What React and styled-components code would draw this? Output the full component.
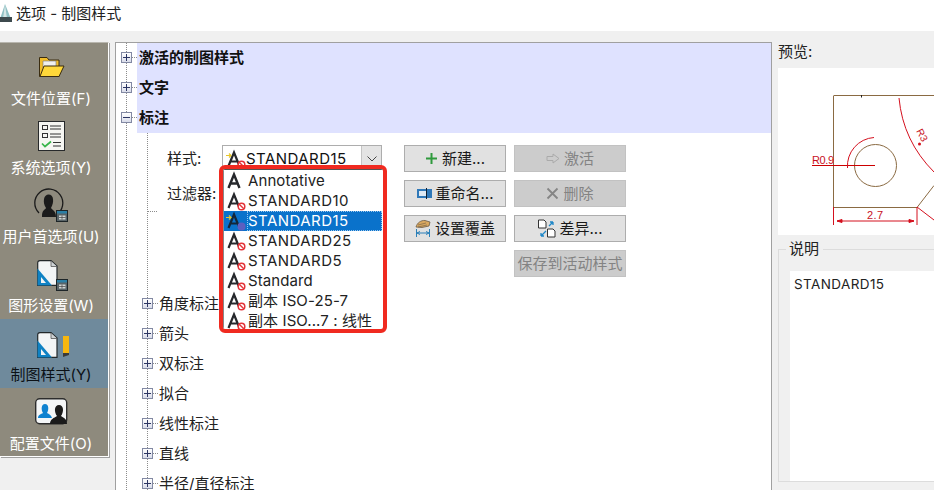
import React from "react";
import styled, { createGlobalStyle } from "styled-components";

const Global = createGlobalStyle`
  html, body { margin: 0; padding: 0; background: #f0f0f0; }
  body { font-family: "Inter", "Noto Sans CJK SC", sans-serif; color: #111; }
  * { box-sizing: border-box; }
`;

const Page = styled.div`
  width: 934px; height: 490px; overflow: hidden; display: flex; flex-direction: column;
  background: #f0f0f0; font-size: 15px;
`;
const TitleBar = styled.div`
  height: 31px; flex: none; background: #fff; display: flex; align-items: center; gap: 3px;
  font-size: 15px; padding-bottom: 7px; color: #222;
`;
const Main = styled.div`
  flex: 1; min-height: 0; display: flex; align-items: flex-start; padding-top: 11px;
`;
const Sidebar = styled.nav`
  width: 109px; height: 415px; flex: none; background: #8e8a7d; padding: 0 6px 0 0;
  border-top: 1px solid #b8b6ae; border-right: 1px solid #fff; border-bottom: 1px solid #fff;
  box-shadow: 1px 1px 0 #a0a0a0;
`;
const NavItem = styled.div`
  height: 69px; margin-right: -6px; padding: 6px 6px 0 0; display: flex; flex-direction: column; align-items: center;
  background: ${p => (p.$active ? "#6f8a9c" : "transparent")};
  color: ${p => (p.$active ? "#0c1116" : "#fff")};
  svg { display: block; flex: none; }
`;
const NavLabel = styled.span`
  margin-top: 3px; height: 22px; line-height: 22px; font-size: 15px; white-space: nowrap;
`;
const Panel = styled.section`
  width: 657px; height: 460px; flex: none; margin-left: 6px; background-color: #fff;
  border: 1px solid #a0a0a0; border-bottom: 0; overflow: hidden;
  background-image: linear-gradient(#8c8c8c 50%, transparent 50%);
  background-size: 1px 2px; background-repeat: repeat-y; background-position: 10px 0;
`;
const Row = styled.div`
  height: 30px; display: flex; align-items: center;
  padding-left: ${p => (p.$child ? "26px" : "5px")};
`;
const Expander = styled.span`
  width: 11px; height: 11px; flex: none; border: 1px solid #8289a3; position: relative; top: -1px; background: linear-gradient(#fff, #d9dcea);
  &::before { content: ""; position: absolute; left: 1px; right: 1px; top: 4px; height: 1px; background: #2b3563; }
  &::after { content: ""; position: absolute; top: 1px; bottom: 1px; left: 4px; width: 1px; background: #2b3563; display: ${p => (p.$open ? "none" : "block")}; }
`;
const Dots = styled.span`
  width: 5px; flex: none; border-top: 1px dotted #8c8c8c; position: relative; top: -1px;
`;
const Heading = styled.div`
  flex: 1; height: 30px; line-height: 30px; padding-left: 2px; background: #dfe2ff; font-weight: 700; font-size: 15px; color: #111;
`;
const ChildText = styled.span`
  margin-left: 1px; margin-bottom: 3px; font-size: 15px; color: #222; white-space: nowrap;
`;
const Children = styled.div`
  background-image: linear-gradient(#8c8c8c 50%, transparent 50%);
  background-size: 1px 2px; background-repeat: repeat-y; background-position: 31px 0;
`;
const Form = styled.div`
  height: 156px; padding: 12px 0 0 51px; display: flex; position: relative;
`;
const Fields = styled.div`
  width: 237px; flex: none; position: relative;
`;
const FieldRow = styled.div`
  height: 27px; margin-bottom: 8px; display: flex; align-items: center; font-size: 15px; color: #222;
`;
const FieldLabel = styled.span`
  width: 55px; flex: none; white-space: nowrap; margin-bottom: 2px;
`;
const Combo = styled.div`
  width: 160px; height: 27px; border: 1px solid #adadad; background: #fff; display: flex; align-items: center; padding-left: 3px; font-size: 15px; color: #111;
`;
const ComboText = styled.span`
  flex: 1; margin-left: 1px; white-space: nowrap; margin-bottom: 1px; letter-spacing: .45px;
`;
const ComboButton = styled.span`
  width: 20px; height: 25px; flex: none; background: #e4e4e4; border-left: 1px solid #c4c4c4; display: flex; align-items: center; justify-content: center;
`;
const Leader = styled.div`
  position: absolute; left: -20px; top: 66px; width: 10px; border-top: 1px dotted #8c8c8c;
`;
const Popover = styled.div`
  position: absolute; left: 52px; top: 20px; width: 168px; height: 168px; border: 4px solid #f02a20; border-radius: 6px;
  background: #fff; overflow: hidden;
`;
const List = styled.ul`
  margin: 0; padding: 1px 0 0; list-style: none; border-top: 1px solid #555; border-left: 1px solid #888; height: 100%;
`;
const Option = styled.li`
  height: 20px; display: flex; align-items: center; padding-left: 2px; font-size: 15px; white-space: nowrap;
  width: 158px; color: ${p => (p.$selected ? "#fff" : "#222")};
  background: ${p => (p.$selected ? "#0a72cb" : "transparent")};
`;
const OptionText = styled.span`
  margin-left: 2px; padding: 0 1px; height: 20px; line-height: 19px; flex: 1;
  letter-spacing: ${p => (p.$wide ? ".45px" : ".1px")};
  outline: ${p => (p.$selected ? "1px dotted #9cc8ef" : "none")}; outline-offset: -1px;
`;
const Buttons = styled.div`
  display: grid; grid-template-columns: 102px 112px; grid-auto-rows: 27px; gap: 8px; align-content: start;
`;
const Button = styled.div`
  display: flex; align-items: center; justify-content: center; gap: 4px; white-space: nowrap; font-size: 15px; line-height: 24px;
  border: 1px solid ${p => (p.$disabled ? "#c2c2c2" : "#adadad")};
  background: ${p => (p.$disabled ? "#cccccc" : "#e1e1e1")};
  color: ${p => (p.$disabled ? "#838383" : "#1a1a1a")};
  grid-column: ${p => p.$column || "auto"};
  svg { flex: none; }
`;
const RightColumn = styled.aside`
  width: 160px; flex: none; margin-left: 6px;
`;
const PreviewLabel = styled.div`
  height: 20px; line-height: 20px; margin-bottom: 6px; font-size: 15px; color: #222;
`;
const Preview = styled.div`
  height: 167px; background: #fff;
  svg { display: block; }
`;
const Group = styled.fieldset`
  margin: 4px 0 0; padding: 0 0 0 11px; width: 170px; border: 1px solid #dcdcdc; min-width: 0;
`;
const GroupLegend = styled.legend`
  padding: 0 4px 0 3px; margin-left: -4px; height: 20px; line-height: 20px; font-size: 15px; color: #222;
`;
const Description = styled.div`
  margin-top: 12px; height: 210px; background: #fff; padding: 3px 4px; font-size: 13.5px; letter-spacing: .4px; line-height: 20px; color: #222;
`;

const Badge = ({ dim }) => (
  <g>
    <circle cx="15.500" cy="14.500" r="3.300" fill={dim ? "#5d5fc0" : "#fff"} stroke={dim ? "#5d5fc0" : "#e4343a"} strokeWidth="1.500" />
    {!dim && <path d="M13.200 12.200 17.800 16.800" stroke="#e4343a" strokeWidth="1.400" />}
  </g>
);

const StyleIcon = ({ badge, arrow, heavy, dark }) => (
  <svg width="19" height="18" viewBox="0 0 19 18" fill="none" overflow="visible">
    <path d="M2.500 16 8 2.500 13.500 16M4.700 11.500H11.300" stroke={dark ? "#13263a" : "#26282c"} strokeWidth={heavy ? 2.400 : 2.200} />
    {arrow && <path d="M0 5.500H4.500M3 3.500 5 5.500 3 7.500" stroke="#e8c72a" strokeWidth="1.200" />}
    {badge && <Badge dim={dark} />}
  </svg>
);

const FolderIcon = () => (
  <svg width="40" height="36" viewBox="0 0 40 36" fill="none">
    <path d="M8.500 27.500V8.500H16L18 11H28V27.500Z" fill="#f2bd2c" stroke="#3a2c10" />
    <path d="M12 12H25V19H12Z" fill="#f0f0ee" stroke="#777" strokeWidth=".6" />
    <path d="M9 27.500 13 17H33L28 27.500Z" fill="#ffd83a" stroke="#3a2c10" />
  </svg>
);
const ChecklistIcon = () => (
  <svg width="40" height="36" viewBox="0 0 40 36" fill="none">
    <rect x="7.500" y="3.500" width="26" height="29" fill="#f6f6f2" stroke="#27292b" />
    <rect x="11.500" y="7.500" width="5" height="4" stroke="#333" />
    <rect x="11.500" y="15.500" width="5" height="4" stroke="#333" />
    <path d="M19 8H30M19 11H30M19 16H30M19 19H30M22 24.500H30M22 28H30" stroke="#333" strokeWidth="1.200" />
    <path d="M11 25.500 14 28.500 20 23.500" stroke="#39b54a" strokeWidth="1.700" />
  </svg>
);
const CalendarBadge = ({ x, y }) => (
  <g transform={`translate(${x} ${y})`}>
    <rect x=".5" y=".5" width="11" height="11" fill="#596468" stroke="#1d2528" />
    <rect x="1" y="1" width="10" height="2.500" fill="#2a7fa6" />
    <path d="M3 5.500H9.500V9.500H3Z" fill="#cfd5d4" />
    <path d="M3 7.500H9.500M6 5.500V9.500" stroke="#444" strokeWidth=".7" />
  </g>
);
const UserIcon = () => (
  <svg width="40" height="36" viewBox="0 0 40 36" fill="none">
    <path d="M25 28A14 14 0 1 0 8 26" stroke="#1b1b1b" strokeWidth="1.300" />
    <path d="M11 29C11 23 14 23 15 21 13 18 12.500 15 13 12 13.500 9 15.500 7.500 17.500 7.500 20 7.500 22 9.500 22 12 22.500 15 21.500 18 20 21 21.500 23 25 24 25 30H11Z" fill="#1b1b1b" />
    <CalendarBadge x={25} y={23} />
  </svg>
);
const SheetBase = ({ top = 4 }) => (
  <g transform={`translate(6 ${top})`}>
    <path d="M.7 3Q.7.7 3 .7H14L20 6V25.300H.7Z" fill="#f3f5f6" stroke="#23282b" strokeWidth="1.200" />
    <path d="M14 1V6.500H20" fill="#cfd3d5" stroke="#555" strokeWidth=".8" />
    <path d="M.5 8.500 15 25.500H.5Z" fill="#0f82c4" />
    <path d="M4 17 9 23H4Z" fill="#f3f5f6" />
  </g>
);
const SettingsIcon = () => (
  <svg width="40" height="36" viewBox="0 0 40 36" fill="none">
    <SheetBase />
    <CalendarBadge x={25} y={23} />
  </svg>
);
const DraftIcon = () => (
  <svg width="40" height="36" viewBox="0 0 40 36" fill="none">
    <SheetBase top={7} />
    <rect x="32" y="11" width="6" height="17" fill="#f8b70e" />
    <path d="M32 28H38V30L32 32Z" fill="#3a3a38" />
  </svg>
);
const ProfileIcon = () => (
  <svg width="40" height="36" viewBox="0 0 40 36" fill="none">
    <rect x="4.700" y="4.700" width="31" height="25" rx="4" fill="#f4f6f7" stroke="#2d2d2d" strokeWidth="1.400" />
    <path d="M7 24C7 21 10 20 12 19 10 16 10 10 14 10 18 10 18 16 16 19 18 20 20 21 21 24Z" fill="#0f82d0" />
    <path d="M19 30C19 25 23 24 26 22 23 18 23 11 28 11 33 11 33 18 30 22 33 24 36 25 36 30Z" fill="#1b1b1b" />
  </svg>
);
const Chevron = () => (
  <svg width="10" height="6" viewBox="0 0 10 6" fill="none"><path d="M.5.5 5 5 9.500.5" stroke="#444" /></svg>
);
const PlusIcon = () => (
  <svg width="13" height="13" viewBox="0 0 13 13" fill="none"><path d="M6.500 1V12M1 6.500H12" stroke="#2f9a3d" strokeWidth="2" /></svg>
);
const ArrowIcon = () => (
  <svg width="14" height="11" viewBox="0 0 14 11" fill="none"><path d="M1 3.500H7V1L13 5.500 7 10V7.500H1Z" stroke="#aaa" /></svg>
);
const CrossIcon = () => (
  <svg width="13" height="13" viewBox="0 0 13 13" fill="none"><path d="M1.500 1.500 11.500 11.500M11.500 1.500 1.500 11.500" stroke="#858585" strokeWidth="1.800" /></svg>
);
const RenameIcon = () => (
  <svg width="15" height="11" viewBox="0 0 15 11" fill="none">
    <rect y="1" width="15" height="9" fill="#2f78b8" />
    <rect x="2" y="3" width="8" height="5" fill="#dfeaf4" />
    <path d="M9.500 0V11" stroke="#123" />
  </svg>
);
const OverrideIcon = () => (
  <svg width="16" height="19" viewBox="0 0 16 19" fill="none">
    <path d="M1 8C2 4 6 1 10 1.500L15 3 14 7 7 8.500Z" fill="#d9a860" stroke="#6b5a45" strokeWidth=".8" />
    <path d="M3 6 11 4M3 8 12 6" stroke="#6b5a45" strokeWidth=".6" />
    <path d="M1.500 10V18M14.500 10V18M2 14H14M2 14 5 12.500M2 14 5 15.500M14 14 11 12.500M14 14 11 15.500" stroke="#2a7fb8" />
  </svg>
);
const DiffIcon = () => (
  <svg width="18" height="19" viewBox="0 0 18 19" fill="none">
    <path d="M.5 1H6L8 3V9H.5ZM9.500 10H15L17 12V18H9.500Z" fill="#fff" stroke="#333" />
    <path d="M11 7 15 3M15 3H12M15 3V6M8 12 3 17M3 17H6M3 17V14" stroke="#1c86c8" strokeWidth="1.300" />
  </svg>
);

const PreviewDrawing = () => (
  <svg width="156" height="167" viewBox="778 68 156 167" fill="none">
    <g stroke="#8a6a42">
      <path d="M833.500 96V207.500H917L934 185.500M833.500 95.500H934" />
      <circle cx="875.500" cy="165.500" r="21" />
    </g>
    <path d="M861.500 95V97.500" stroke="#222" />
    <g stroke="#d4101e">
      <path d="M812 165.500H875" stroke="#c00" />
      <path d="M874 137.500A28.500 28.500 0 0 0 847.500 168" />
      <path d="M899 98Q903 141 934 172" />
      <path d="M833.500 207V225M917 207V225M837 221H914M917 207 934 220" />
      <path d="M837 221 842 219.500V222.500Z M914 221 909 219.500V222.500Z" fill="#d4101e" />
    </g>
    <circle cx="919.500" cy="144" r="1.500" fill="#d4101e" />
    <g fill="#c8101e" fontFamily="'Liberation Sans', sans-serif" fontSize="11">
      <text x="812" y="164" textLength="22">R0.9</text>
      <text x="867" y="219" textLength="16">2.7</text>
      <text transform="translate(916 131) rotate(62)" fontSize="10">R3</text>
    </g>
  </svg>
);

const navItems = [
  { icon: FolderIcon, label: "文件位置(F)" },
  { icon: ChecklistIcon, label: "系统选项(Y)" },
  { icon: UserIcon, label: "用户首选项(U)" },
  { icon: SettingsIcon, label: "图形设置(W)" },
  { icon: DraftIcon, label: "制图样式(Y)", active: true },
  { icon: ProfileIcon, label: "配置文件(O)" },
];
const styleOptions = [
  { label: "Annotative", heavy: true },
  { label: "STANDARD10", badge: true, wide: true },
  { label: "STANDARD15", badge: true, arrow: true, selected: true, wide: true },
  { label: "STANDARD25", badge: true, wide: true },
  { label: "STANDARD5", badge: true, wide: true },
  { label: "Standard", badge: true },
  { label: "副本 ISO-25-7", badge: true },
  { label: "副本 ISO...7 : 线性", badge: true },
];
const childRows = ["角度标注", "箭头", "双标注", "拟合", "线性标注", "直线", "半径/直径标注"];

export default function App() {
  return (
    <Page>
      <Global />
      <TitleBar>
        <svg width="13" height="20" viewBox="0 0 13 20" fill="none">
          <path d="M5 2 11 17H0Z" fill="#8fc0c4" />
          <path d="M5 2 7 17H3Z" fill="#d5e6e6" />
          <rect x="0" y="15" width="12" height="5" fill="#3d4a4e" />
        </svg>
        选项 - 制图样式
      </TitleBar>
      <Main>
        <Sidebar>
          {navItems.map(({ icon: Icon, label, active }) => (
            <NavItem key={label} $active={active}>
              <Icon />
              <NavLabel>{label}</NavLabel>
            </NavItem>
          ))}
        </Sidebar>
        <Panel>
          <Row><Expander /><Dots /><Heading>激活的制图样式</Heading></Row>
          <Row><Expander /><Dots /><Heading>文字</Heading></Row>
          <Row><Expander $open /><Dots /><Heading>标注</Heading></Row>
          <Children>
            <Form>
              <Fields>
                <FieldRow>
                  <FieldLabel>样式:</FieldLabel>
                  <Combo>
                    <StyleIcon badge arrow />
                    <ComboText>STANDARD15</ComboText>
                    <ComboButton><Chevron /></ComboButton>
                  </Combo>
                </FieldRow>
                <FieldRow><FieldLabel>过滤器:</FieldLabel></FieldRow>
                <Leader />
                <Popover>
                  <List>
                    {styleOptions.map(o => (
                      <Option key={o.label} $selected={o.selected}>
                        <StyleIcon badge={o.badge} arrow={o.arrow} heavy={o.heavy} dark={o.selected} />
                        <OptionText $selected={o.selected} $wide={o.wide}>{o.label}</OptionText>
                      </Option>
                    ))}
                  </List>
                </Popover>
              </Fields>
              <Buttons>
                <Button><PlusIcon />新建...</Button>
                <Button $disabled><ArrowIcon />激活</Button>
                <Button><RenameIcon />重命名...</Button>
                <Button $disabled><CrossIcon />删除</Button>
                <Button><OverrideIcon />设置覆盖</Button>
                <Button><DiffIcon />差异...</Button>
                <Button $disabled $column="2">保存到活动样式</Button>
              </Buttons>
            </Form>
            {childRows.map(t => (
              <Row key={t} $child><Expander /><Dots /><ChildText>{t}</ChildText></Row>
            ))}
          </Children>
        </Panel>
        <RightColumn>
          <PreviewLabel>预览:</PreviewLabel>
          <Preview><PreviewDrawing /></Preview>
          <Group>
            <GroupLegend>说明</GroupLegend>
            <Description>STANDARD15</Description>
          </Group>
        </RightColumn>
      </Main>
    </Page>
  );
}
